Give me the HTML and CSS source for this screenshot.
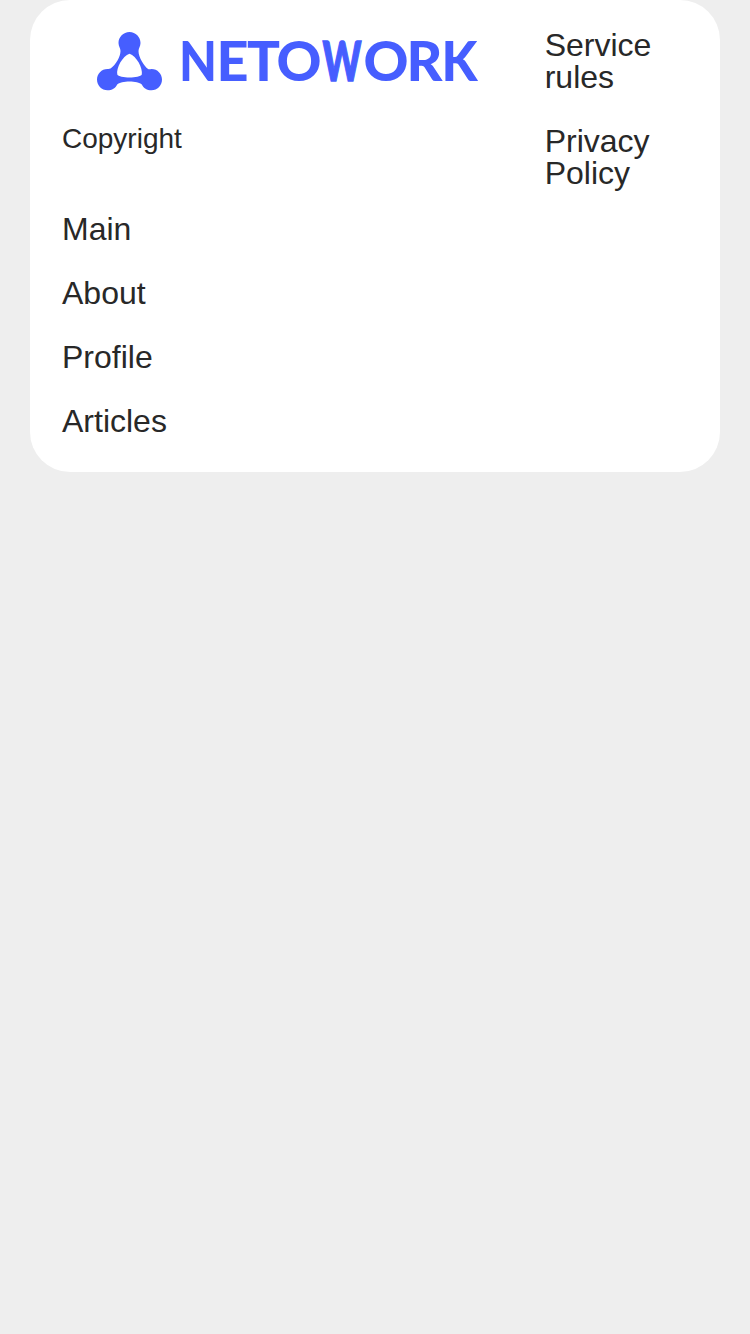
FILE: index.html
```html
<!DOCTYPE html>
<html lang="en">
<head>
<meta charset="utf-8">
<title>Netowork</title>
<link rel="stylesheet" href="styles.css">
</head>
<body>
<footer class="footer">
  <div class="footer-main">
    <svg class="logo" viewBox="0 0 382 60" role="img" aria-label="NETOWORK">
      <path class="logo-mark" transform="translate(.5 0)" fill-rule="evenodd" d="M33 0C39.2 0 44 5 44 11C44 14 42 16.500 42 19C42 25 47.500 34.500 52 37.200C53 37.400 54 36.900 55 36.900C61 36.900 65.500 41.700 65.500 47.500C65.500 53.500 60.700 58.300 55 58.300C50.500 58.300 47 56.300 45.300 52.500C41.500 48.500 24.500 48.500 20.700 52.500C19 56.300 15.500 58.300 11 58.300C5.300 58.300.5 53.500.5 47.500C.5 41.700 5 36.900 11 36.900C12 36.900 13 37 14 36.500C19 33 24 25 24 19C24 16.500 22 14 22 11C22 5 26.800 0 33 0ZM33 21.700C26 24 19.500 36 20.800 42.500C22.500 46.500 43.500 46.500 45.300 42.500C46.500 36 40 24 33 21.700Z"/>
      <text class="logo-text" y="49"><tspan x="83" textLength="38" lengthAdjust="spacingAndGlyphs">N</tspan><tspan x="120.500" textLength="32" lengthAdjust="spacingAndGlyphs">E</tspan><tspan x="151" textLength="33" lengthAdjust="spacingAndGlyphs">T</tspan><tspan x="180.500" textLength="45" lengthAdjust="spacingAndGlyphs">O</tspan><tspan class="logo-w" x="226.500" textLength="39" lengthAdjust="spacingAndGlyphs">W</tspan><tspan x="267.500" textLength="45" lengthAdjust="spacingAndGlyphs">O</tspan><tspan x="310.500" textLength="36" lengthAdjust="spacingAndGlyphs">R</tspan><tspan x="345.500" textLength="36" lengthAdjust="spacingAndGlyphs">K</tspan></text>
    </svg>
    <p class="copyright">Copyright</p>
    <nav class="links">
      <a>Main</a>
      <a>About</a>
      <a>Profile</a>
      <a>Articles</a>
    </nav>
  </div>
  <nav class="links legal">
    <a>Service rules</a>
    <a>Privacy Policy</a>
  </nav>
</footer>
</body>
</html>
```

FILE: styles.css
```css
body {
  margin: 0;
  background: #eee;
  color: #282828;
  font-family: "Liberation Sans", Arial, sans-serif;
}

.footer {
  box-sizing: border-box;
  display: flex;
  width: 690px;
  height: 472px;
  margin: 0 auto;
  padding: 29px 32px;
  border-radius: 40px;
  background: #fff;
}

.footer-main {
  width: 482.7px;
}

.logo {
  display: block;
  width: 382px;
  height: 60px;
  margin: 3px 0 0 34px;
  overflow: visible;
}

.logo-mark,
.logo-text {
  fill: #465eff;
}

.logo-text {
  font: 900 55.5px Lato, sans-serif;
}

.logo-w {
  stroke: #465eff;
  stroke-width: 1.4px;
}

.copyright {
  margin: 33px 0 60px;
  font-size: 28px;
  line-height: 28px;
}

.links {
  display: flex;
  flex-direction: column;
  gap: 32px;
  font-size: 32px;
  line-height: 32px;
}

.legal {
  width: 110px;
}
```
